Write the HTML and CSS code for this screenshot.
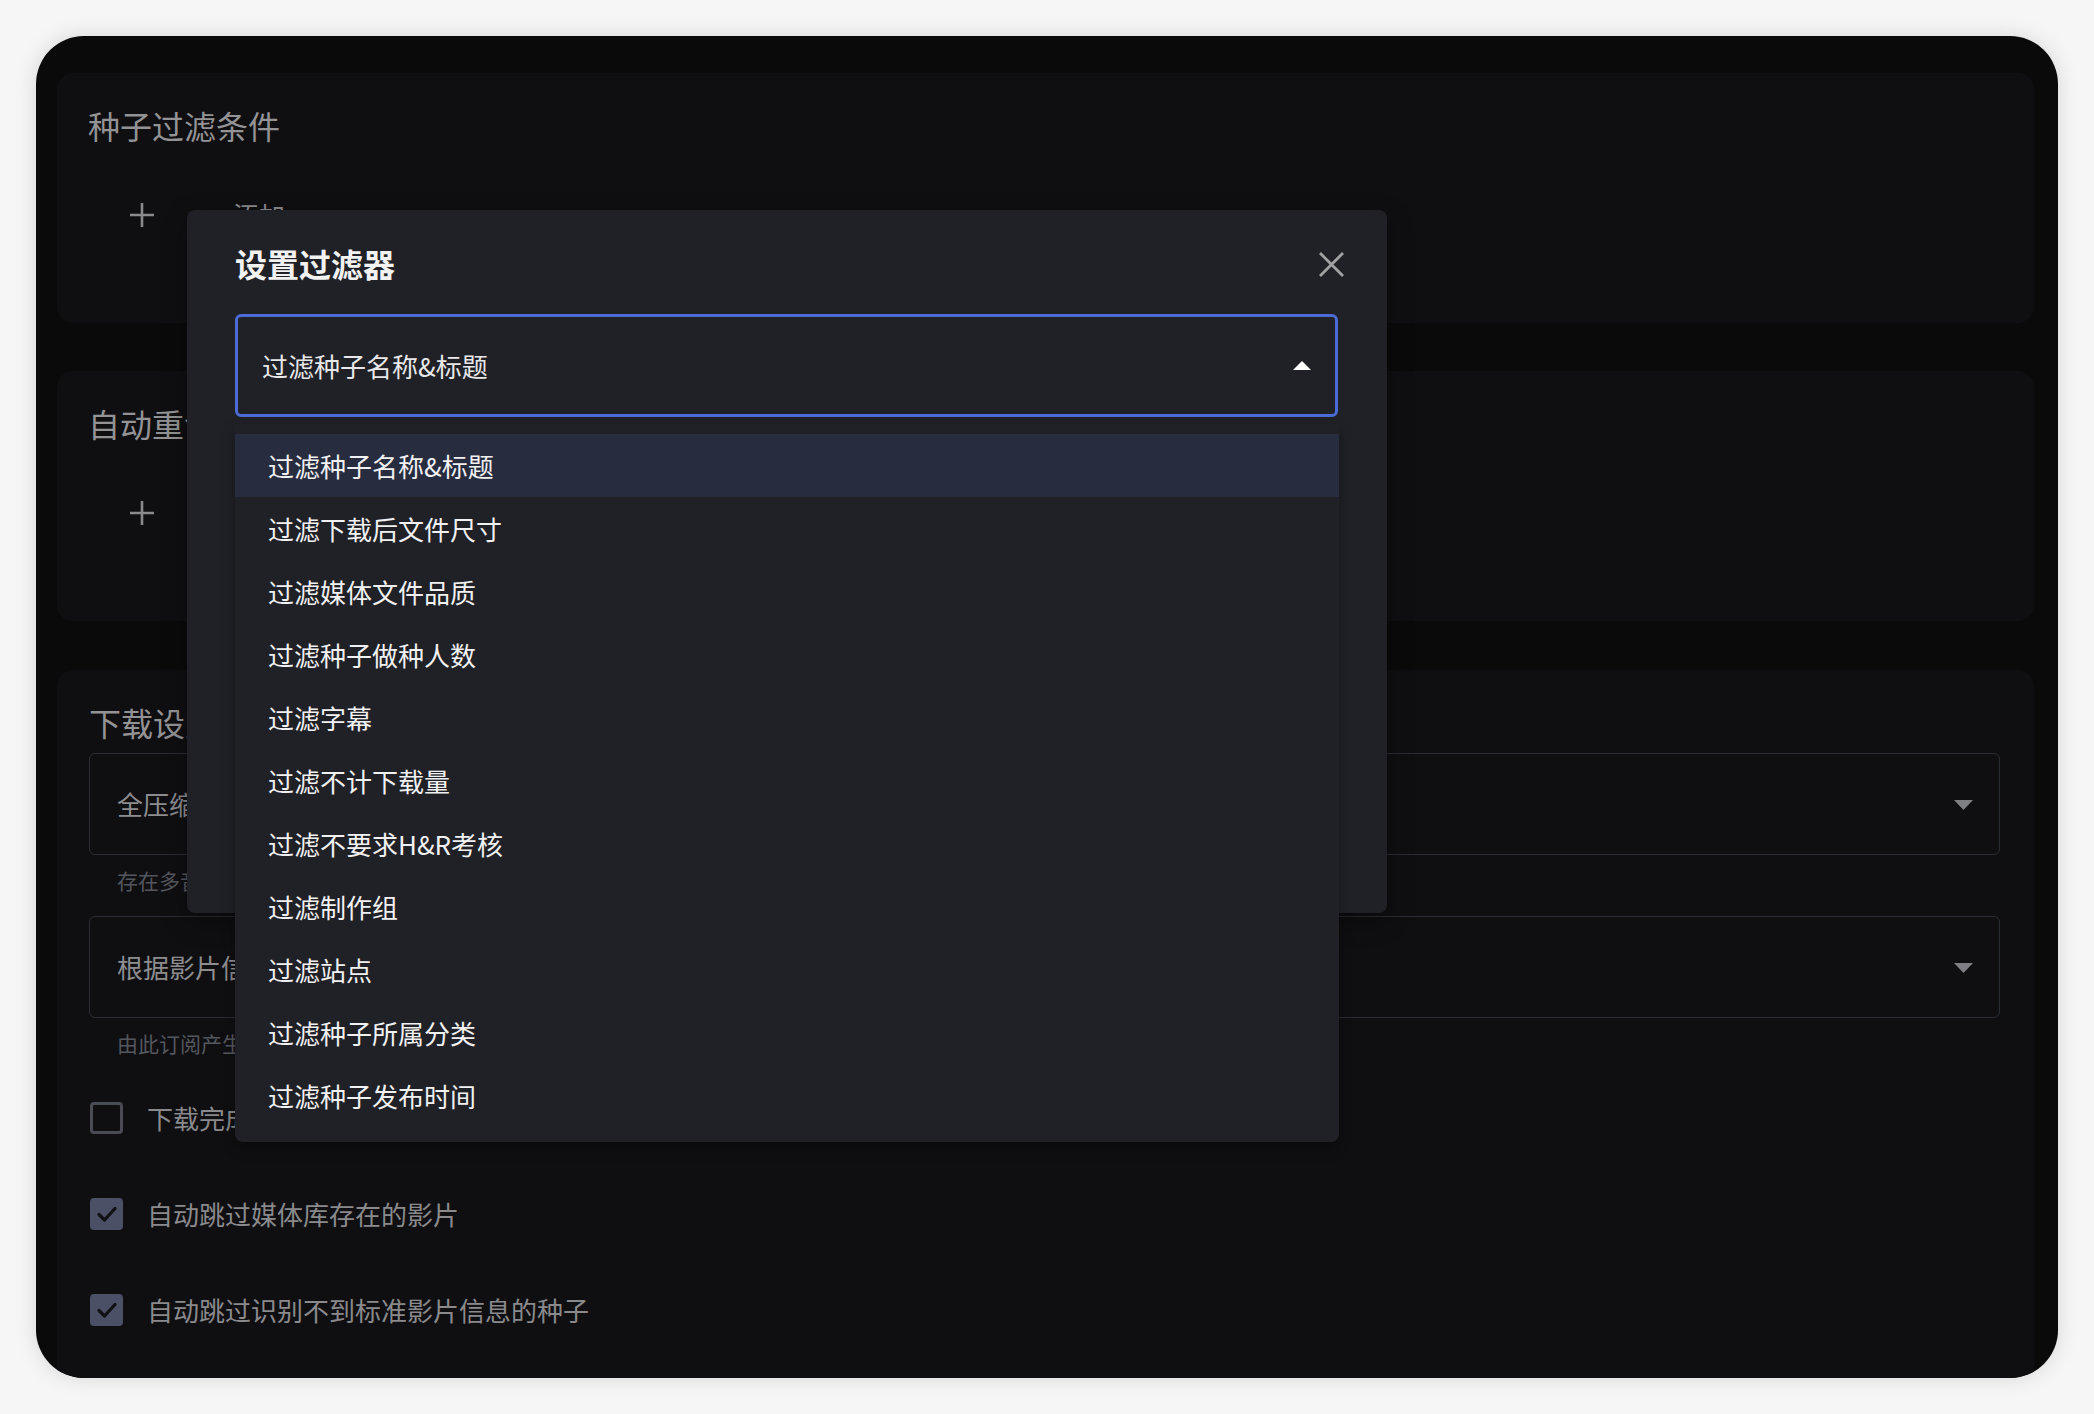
FILE: index.html
```html
<!DOCTYPE html>
<html lang="zh-CN">
<head>
<meta charset="utf-8">
<title>设置过滤器</title>
<link rel="stylesheet" href="styles.css">
</head>
<body>
<div class="frame">
  <section class="card card-short">
    <h2 class="card-title">种子过滤条件</h2>
    <div class="add-row">
      <svg class="plus" viewBox="0 0 26 26" width="26" height="26"><path d="M13 1V25M1 13H25" stroke="#8a8a8c" stroke-width="2.6" fill="none"/></svg>
      <span class="add-text">添加</span>
    </div>
  </section>

  <section class="card card-short">
    <h2 class="card-title">自动重命名规则</h2>
    <div class="add-row">
      <svg class="plus" viewBox="0 0 26 26" width="26" height="26"><path d="M13 1V25M1 13H25" stroke="#8a8a8c" stroke-width="2.6" fill="none"/></svg>
      <span class="add-text">添加</span>
    </div>
  </section>

  <section class="card card-settings">
    <h2 class="card-title">下载设置</h2>
    <div class="field">
      <span class="field-text">全压缩包下载</span>
      <svg class="tri-down" viewBox="0 0 19 10" width="19" height="10"><path d="M0 0H19L9.5 10Z" fill="#7e7f83"/></svg>
    </div>
    <div class="hint">存在多音轨时优先下载</div>
    <div class="field field-second">
      <span class="field-text">根据影片信息自动选择</span>
      <svg class="tri-down" viewBox="0 0 19 10" width="19" height="10"><path d="M0 0H19L9.5 10Z" fill="#7e7f83"/></svg>
    </div>
    <div class="hint">由此订阅产生的下载任务将保存到此目录</div>

    <div class="check-row first-check">
      <span class="box"></span>
      <span class="check-label">下载完成后删除种子</span>
    </div>
    <div class="check-row">
      <span class="box box-on"><svg viewBox="0 0 32 32" width="32" height="32"><path d="M8 16.5L13.5 22L24 10.5" stroke="#101114" stroke-width="3.2" fill="none" stroke-linecap="round" stroke-linejoin="round"/></svg></span>
      <span class="check-label">自动跳过媒体库存在的影片</span>
    </div>
    <div class="check-row">
      <span class="box box-on"><svg viewBox="0 0 32 32" width="32" height="32"><path d="M8 16.5L13.5 22L24 10.5" stroke="#101114" stroke-width="3.2" fill="none" stroke-linecap="round" stroke-linejoin="round"/></svg></span>
      <span class="check-label">自动跳过识别不到标准影片信息的种子</span>
    </div>
  </section>

  <div class="dialog">
    <div class="dialog-head">
      <h1 class="dialog-title">设置过滤器</h1>
      <svg class="close" viewBox="0 0 27 27" width="27" height="27"><path d="M2 2L25 25M25 2L2 25" stroke="#a2a2a4" stroke-width="2.8" fill="none"/></svg>
    </div>
    <div class="select-wrap">
      <div class="select">
        <span class="select-value">过滤种子名称&amp;标题</span>
        <svg class="tri-up" viewBox="0 0 18 9" width="18" height="9"><path d="M0 9H18L9 0Z" fill="#ffffff"/></svg>
      </div>
      <ul class="menu">
        <li class="item item-active">过滤种子名称&amp;标题</li>
        <li class="item">过滤下载后文件尺寸</li>
        <li class="item">过滤媒体文件品质</li>
        <li class="item">过滤种子做种人数</li>
        <li class="item">过滤字幕</li>
        <li class="item">过滤不计下载量</li>
        <li class="item">过滤不要求H&amp;R考核</li>
        <li class="item">过滤制作组</li>
        <li class="item">过滤站点</li>
        <li class="item">过滤种子所属分类</li>
        <li class="item">过滤种子发布时间</li>
      </ul>
    </div>
  </div>
</div>
</body>
</html>
```

FILE: styles.css
```css
* { box-sizing: border-box; }

html, body {
  margin: 0;
  padding: 0;
}

body {
  background: #f6f6f6;
  font-family: "Noto Sans CJK SC", "Noto Sans", sans-serif;
  width: 2094px;
  height: 1414px;
  overflow: hidden;
}

.frame {
  position: relative;
  margin: 36px 0 0 36px;
  width: 2022px;
  height: 1342px;
  border-radius: 48px;
  overflow: hidden;
  background: #0a0a0b;
  box-shadow: 0 0 22px rgba(0, 0, 0, 0.13);
  padding: 37px 24px 0 21px;
  display: flex;
  flex-direction: column;
  gap: 49px;
}

.card {
  background: #0f0f11;
  border-radius: 16px;
  padding: 30px 32px 0 31px;
  flex-shrink: 0;
}

.card-short {
  height: 250px;
}

.card-short + .card-short {
  margin-top: -1px;
}

.card-title {
  margin: 0;
  font-size: 32px;
  line-height: 44px;
  font-weight: 400;
  color: #939395;
}

.add-row {
  margin-top: 40px;
  height: 56px;
  display: flex;
  align-items: center;
}

.plus {
  margin-left: 41px;
  display: block;
}

.add-text {
  margin-left: 78px;
  font-size: 26px;
  line-height: 36px;
  color: #8a8a8c;
}

.card-settings {
  height: 760px;
  padding-left: 32px;
  padding-right: 34px;
}

.field {
  margin-top: 9px;
  height: 102px;
  border: 1px solid #2b2d34;
  border-radius: 6px;
  display: flex;
  align-items: center;
  justify-content: space-between;
  padding: 0 26px 0 27px;
}

.field-second {
  margin-top: 21px;
}

.field-text {
  font-size: 26px;
  line-height: 36px;
  color: #8d8d90;
}

.tri-down {
  display: block;
  margin-top: 2px;
}

.hint {
  margin-top: 10px;
  padding-left: 28px;
  font-size: 21px;
  line-height: 30px;
  color: #55575e;
}

.check-row {
  height: 96px;
  display: flex;
  align-items: center;
  gap: 24px;
}

.first-check {
  margin-top: 12px;
}

.box {
  width: 33px;
  height: 32px;
  margin-left: 1px;
  border: 3px solid #4a4c55;
  border-radius: 4px;
  display: flex;
  align-items: center;
  justify-content: center;
  flex-shrink: 0;
}

.box-on {
  background: #4b5066;
  border-color: #4b5066;
}

.box-on svg {
  display: block;
  flex-shrink: 0;
}

.check-label {
  font-size: 26px;
  line-height: 36px;
  color: #8a8a8d;
}

/* dialog overlay */
.dialog {
  position: absolute;
  left: 151px;
  top: 174px;
  width: 1200px;
  height: 703px;
  background: #202126;
  border-radius: 8px;
  padding: 31px 49px 0 48px;
  box-shadow: 0 8px 24px rgba(0, 0, 0, 0.35);
}

.dialog-head {
  height: 44px;
  display: flex;
  align-items: center;
  justify-content: space-between;
}

.dialog-title {
  margin: 0;
  font-size: 32px;
  line-height: 44px;
  font-weight: 700;
  color: #f2f2f3;
}

.close {
  display: block;
  margin-right: -7px;
  margin-top: 2px;
}

.select-wrap {
  position: relative;
  margin-top: 29px;
}

.select {
  height: 103px;
  border: 3px solid #4b6bd6;
  border-radius: 6px;
  display: flex;
  align-items: center;
  justify-content: space-between;
  padding: 0 24px;
}

.select-value {
  font-size: 26px;
  line-height: 36px;
  color: #e8e8ea;
}

.tri-up {
  display: block;
}

.menu {
  position: absolute;
  left: 0;
  top: 110px;
  width: 1104px;
  margin: 0;
  padding: 10px 0 15px;
  list-style: none;
  background: #202126;
  border-radius: 0 0 8px 8px;
  box-shadow: 0 6px 14px rgba(0, 0, 0, 0.3);
  z-index: 2;
}

.item {
  height: 63px;
  display: flex;
  align-items: center;
  padding-left: 33px;
  font-size: 26px;
  color: #f1f1f3;
}

.item-active {
  background: #272c3f;
}
```
